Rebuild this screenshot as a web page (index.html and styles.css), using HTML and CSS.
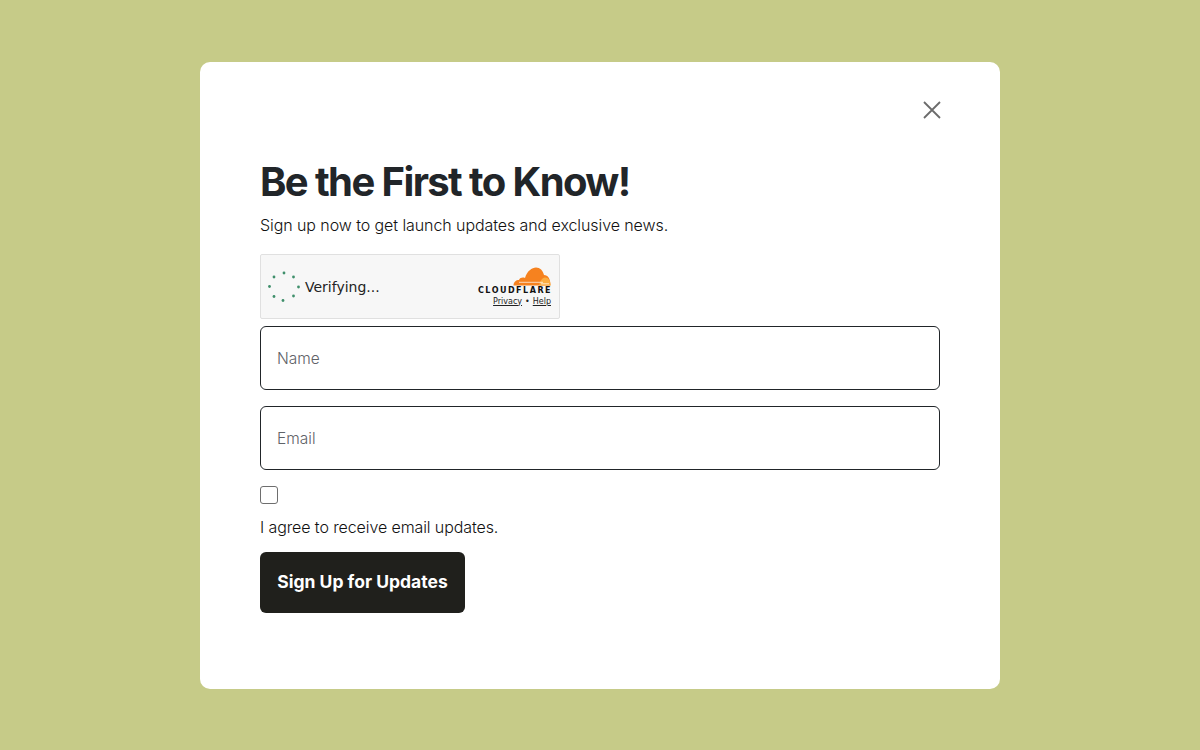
FILE: index.html
```html
<!DOCTYPE html>
<html lang="en">

<head>
    <meta charset="UTF-8">
    <title>Sign up</title>
    <link rel="stylesheet" href="styles.css">
</head>

<body>
    <div class="modal">
        <div class="modalTop">
            <svg class="closeIcon" width="18" height="18" viewBox="0 0 18 18">
                <path d="M1 1 L17 17 M17 1 L1 17" stroke="#6b6b6b" stroke-width="1.8" fill="none" />
            </svg>
        </div>
        <h1 class="title">Be the First to Know!</h1>
        <p class="subtitle">Sign up now to get launch updates and exclusive news.</p>
        <div class="widget">
            <svg class="spinner" width="32" height="32" viewBox="0 0 32 32">
                <circle cx="16" cy="2" r="1.4" fill="#3f8f6b" />
                <circle cx="25.5" cy="6" r="1.4" fill="#3f8f6b" />
                <circle cx="30.5" cy="16" r="1.4" fill="#3f8f6b" />
                <circle cx="25.5" cy="25" r="1.4" fill="#3f8f6b" />
                <circle cx="15" cy="29.500" r="1.4" fill="#3f8f6b" />
                <circle cx="6" cy="25.500" r="1.4" fill="#3f8f6b" />
                <circle cx="1.500" cy="15.500" r="1.4" fill="#3f8f6b" />
                <circle cx="6" cy="6" r="1.4" fill="#3f8f6b" />
            </svg>
            <span class="verifying">Verifying...</span>
            <div class="brand">
                <svg class="cloud" width="38" height="19" viewBox="0 0 38 19">
                    <path d="M0.5 18.500 C0.5 15 3 13 6 13 C7 10.500 10 10 12 11 C14 4 19 0.500 23 0.500 C27 0.500 30 3.500 31 8 C35 8 37.500 12 37.500 18.500 Z" fill="#f6821f" />
                    <path d="M26 18.500 C27 14 29 11 32 10.500 C35.500 10.500 37.500 14 37.500 18.500 Z" fill="#fbad41" />
                    <path d="M6 15.300 H30 M28 16.800 H36" stroke="#fff" stroke-width="0.7" fill="none" />
                </svg>
                <div class="brandName">CLOUDFLARE</div>
                <div class="brandLinks"><u>Privacy</u><span class="dot">•</span><u>Help</u></div>
            </div>
        </div>
        <div class="field">Name</div>
        <div class="field">Email</div>
        <div class="checkbox"></div>
        <p class="agree">I agree to receive email updates.</p>
        <button class="submit">Sign Up for Updates</button>
    </div>
</body>

</html>
```
FILE: styles.css
```css
* {
    box-sizing: border-box;
}

body {
    margin: 0;
    height: 750px;
    overflow: hidden;
    background-color: #c6cb88;
    font-family: "Inter", "Liberation Sans", sans-serif;
    display: flex;
    align-items: flex-start;
    justify-content: center;
    padding-top: 62px;
}

.modal {
    width: 800px;
    height: 627px;
    background-color: #fff;
    border-radius: 10px;
    padding: 39px 60px 0;
}

.modalTop {
    display: flex;
    justify-content: flex-end;
}

.closeIcon {
    display: block;
    margin-right: -1px;
}

.title {
    margin: 38px 0 0;
    font-size: 40px;
    line-height: 50px;
    font-weight: 700;
    letter-spacing: -1.6px;
    color: #212529;
}

.subtitle {
    margin: 6px 0 0;
    font-size: 16px;
    font-weight: 300;
    line-height: 24px;
    letter-spacing: -0.08px;
    color: #111;
}

.widget {
    width: 300px;
    height: 65px;
    margin-top: 17px;
    background-color: #f7f7f7;
    border: 1px solid #e0e0e0;
    border-radius: 2px;
    display: flex;
    align-items: center;
    padding: 0 8px 0 7px;
    font-family: "DejaVu Sans", sans-serif;
}

.spinner {
    display: block;
    margin-top: 1px;
}

.verifying {
    margin-left: 5px;
    font-size: 14px;
    color: #232323;
}

.brand {
    margin-left: auto;
    display: flex;
    flex-direction: column;
    align-items: flex-end;
}

.cloud {
    display: block;
}

.brandName {
    font-family: "DejaVu Sans", sans-serif;
    font-size: 8px;
    line-height: 8px;
    font-weight: 700;
    letter-spacing: 1.5px;
    margin-top: 1px;
    margin-right: -1px;
    color: #111;
}

.brandLinks {
    margin-top: 1px;
    font-size: 8px;
    line-height: 11px;
    color: #232323;
}

.dot {
    margin: 0 3px;
}

.field {
    height: 64px;
    margin-top: 7px;
    margin-bottom: 16px;
    border: 1px solid #212529;
    border-radius: 6px;
    padding: 0 16px;
    display: flex;
    align-items: center;
    font-size: 15.5px;
    font-weight: 300;
    color: #5f6368;
}

.field + .field {
    margin-top: 0;
}

.checkbox {
    width: 18px;
    height: 18px;
    border: 1px solid #6e6e6e;
    border-radius: 3px;
    background-color: #fff;
}

.agree {
    margin: 11px 0 0;
    font-size: 16px;
    font-weight: 300;
    line-height: 24px;
    letter-spacing: -0.1px;
    color: #111;
}

.submit {
    display: block;
    width: 205px;
    height: 61px;
    margin-top: 13px;
    border: 0;
    border-radius: 6px;
    background-color: #20201c;
    color: #fff;
    font-family: inherit;
    font-size: 17.5px;
    font-weight: 700;
    padding: 0 0 2px;
}
```
